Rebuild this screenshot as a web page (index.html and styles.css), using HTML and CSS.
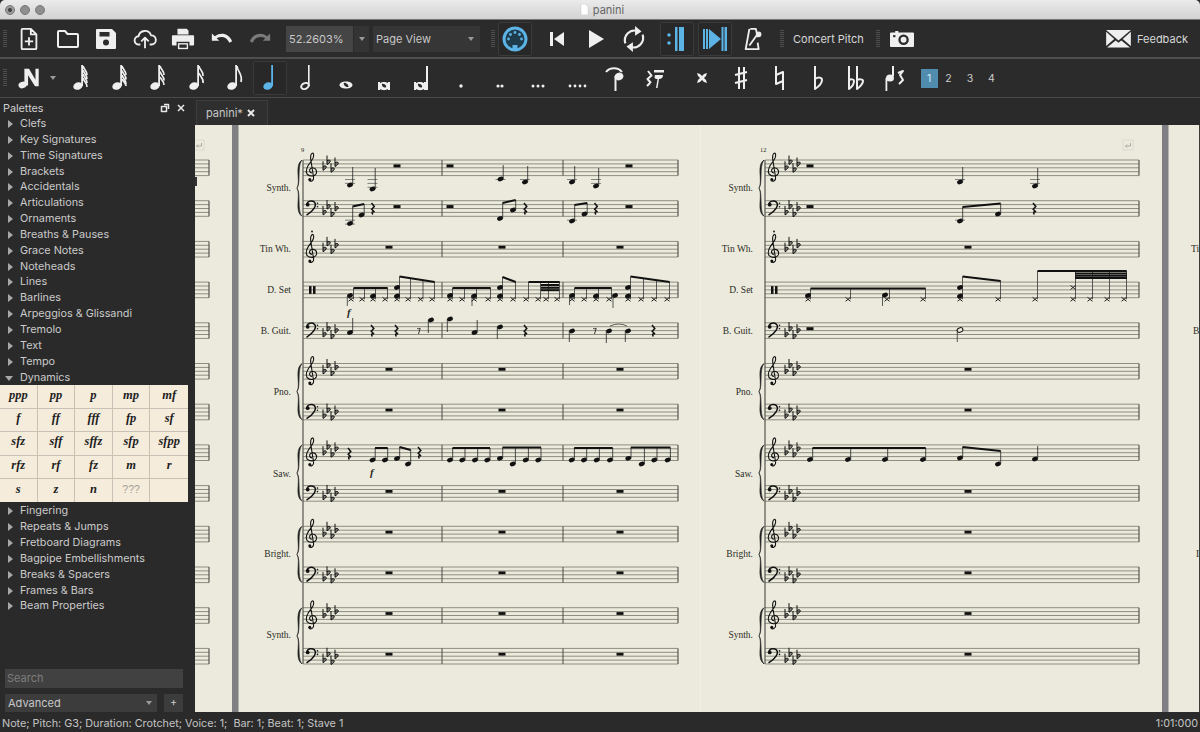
FILE: index.html
```html
<!DOCTYPE html>
<html lang="en">
<head>
<meta charset="utf-8">
<title>panini</title>
<link rel="stylesheet" href="styles.css">
</head>
<body>
<svg class="defs" width="0" height="0" aria-hidden="true">
  <symbol id="stem" viewBox="0 0 24 28"><ellipse cx="10" cy="22" rx="4.800" ry="3.700" transform="rotate(-20 10 22)"/><rect x="13.200" y="1" width="1.800" height="21"/></symbol>
  <symbol id="grip" viewBox="0 0 4 18"><path class="dots" d="M1 0V18M3 0V18"/></symbol>
</svg>
<div class="app">
  <header class="titlebar">
    <div class="lights"><i></i><i></i><i></i></div>
    <div class="wintitle"><svg class="docmini" viewBox="0 0 10 12"><path d="M1 0h5l3 3v9H1z"/></svg>panini</div>
  </header>

  <div class="toolbar row1">
    <svg class="grip"><use href="#grip"/></svg>
    <span class="tb"><svg viewBox="0 0 24 26"><path class="ln" d="M5 2h9l6 6v15a1 1 0 0 1-1 1H5a1 1 0 0 1-1-1V3a1 1 0 0 1 1-1zM14 2v6h6M12 11v9M7.500 15.500h9"/></svg></span>
    <span class="tb"><svg viewBox="0 0 24 24"><path class="ln" d="M2 5a1 1 0 0 1 1-1h6l2.500 3H21a1 1 0 0 1 1 1v11a1 1 0 0 1-1 1H3a1 1 0 0 1-1-1z"/></svg></span>
    <span class="tb"><svg viewBox="0 0 24 24"><path d="M3 2h15l4 4v15a1 1 0 0 1-1 1H3a1 1 0 0 1-1-1V3a1 1 0 0 1 1-1z"/><rect class="cut" x="5.500" y="5" width="10" height="4.500"/><circle class="cut" cx="12" cy="15.500" r="3"/></svg></span>
    <span class="tb"><svg viewBox="0 0 26 24"><path class="ln" d="M8 18H6.500a4.500 4.500 0 0 1-.5-9 7 7 0 0 1 13.500-1 5 5 0 0 1 .5 10h-2M13 22V11M9 14.500 13 10.500l4 4"/></svg></span>
    <span class="tb"><svg viewBox="0 0 26 24"><path d="M7 1h10l2 2v4H7z"/><path d="M2 8h22a1 1 0 0 1 1 1v9a1 1 0 0 1-1 1h-4v-4H6v4H2a1 1 0 0 1-1-1V9a1 1 0 0 1 1-1z"/><rect x="7.500" y="16.500" width="11" height="6.500"/><rect class="cut" x="9" y="18" width="8" height="3.500"/></svg></span>
    <span class="tb"><svg viewBox="0 0 26 24"><path d="M2 6v8h8L7.200 11.300C12 8.500 18 9.500 21 16l3-1.500C20.500 6 12 4 5.200 9z"/></svg></span>
    <span class="tb off"><svg viewBox="0 0 26 24"><path d="M24 6v8h-8l2.800-2.700C14 8.500 8 9.500 5 16l-3-1.500C5.500 6 14 4 20.800 9z"/></svg></span>
    <span class="combo zoomval">52.2603%</span>
    <span class="combo arrowbtn"><i class="caret"></i></span>
    <span class="combo viewsel">Page View<i class="caret"></i></span>
    <svg class="grip g2"><use href="#grip"/></svg>
    <span class="box blue"><svg viewBox="0 0 26 26"><circle cx="13" cy="13" r="11" class="ring"/><g class="mdots"><circle cx="6.500" cy="13" r="1.400"/><circle cx="8.500" cy="8.500" r="1.400"/><circle cx="13" cy="6.500" r="1.400"/><circle cx="17.500" cy="8.500" r="1.400"/><circle cx="19.500" cy="13" r="1.400"/></g><rect x="10.500" y="19" width="5" height="4.500" class="mkey"/></svg></span>
    <span class="tb gapl"><svg viewBox="0 0 24 24"><rect x="5" y="5" width="3" height="14"/><path d="M19 5v14L9 12z"/></svg></span>
    <span class="tb"><svg viewBox="0 0 24 24"><path d="M5 3v18l15-9z"/></svg></span>
    <span class="tb"><svg class="loop" viewBox="0 0 24 26"><path class="ln" d="M4 17a9 9 0 0 1 11-11.500M20 9a9 9 0 0 1-11 11.500"/><path d="M13 1l6 5-6 4zM11 25l-6-5 6-4z"/></svg></span>
    <span class="box blue b1"><svg viewBox="0 0 26 26"><circle cx="5" cy="9" r="1.800"/><circle cx="5" cy="17" r="1.800"/><rect x="11" y="1" width="2.500" height="24"/><rect x="15" y="1" width="5" height="24"/></svg></span>
    <span class="box blue b2"><svg viewBox="0 0 26 26"><rect x="1" y="3" width="2" height="20"/><rect x="4" y="3" width="2" height="20"/><path d="M7 3v20l12-10z"/><rect x="19.500" y="1" width="2" height="24"/><rect x="22.500" y="1" width="2.500" height="24"/></svg></span>
    <span class="tb mt"><svg viewBox="0 0 24 26"><path class="ln" d="M8 2h6l2 9M7 2 3 24h14l-1-7"/><path class="ln" d="M7 20 15 9"/><circle cx="17" cy="8" r="3"/></svg></span>
    <svg class="grip g3"><use href="#grip"/></svg>
    <span class="lbl concert">Concert Pitch</span>
    <svg class="grip g4"><use href="#grip"/></svg>
    <svg class="cam" viewBox="0 1 23 16.500"><path d="M1 3h4V1.500h3V3h14a1 1 0 0 1 1 1v12a1 1 0 0 1-1 1H1a1 1 0 0 1-1-1V4a1 1 0 0 1 1-1z"/><circle class="cut" cx="13" cy="10" r="5"/><circle cx="13" cy="10" r="2.800"/><rect class="cut" x="3" y="5.500" width="2.200" height="2"/></svg>
    <span class="spacer"></span>
    <svg class="mail" viewBox="0 0 26 20"><path d="M0 1h26L13 12z"/><path d="M0 3v15l8.500-7.500zM26 3v15l-8.500-7.500zM1 19.500h24L16 12l-3 2.500L10 12z"/></svg>
    <span class="lbl feedback">Feedback</span>
  </div>

  <div class="toolbar row2">
    <svg class="grip"><use href="#grip"/></svg>
    <span class="tb"><svg viewBox="0 0 26 26"><ellipse cx="6" cy="20.500" rx="4.500" ry="3.500" transform="rotate(-20 6 20.500)"/><path d="M8 3h5l7 12V3h3.500v19h-4L12 10v11H8z"/></svg></span>
    <span class="dd"><i class="caret"></i></span>
    <span class="tb"><svg class="nt" viewBox="0 0 24 28"><use href="#stem"/><path class="ln fl" d="M15 2c.5 3 4.500 5 4 9M15 6c.5 3 4.500 5 4 9M15 10c.5 3 4.500 5 4 9M15 14c.5 3 4.500 5 4 9"/></svg></span>
    <span class="tb"><svg class="nt" viewBox="0 0 24 28"><use href="#stem"/><path class="ln fl" d="M15 2c.5 3 4.500 5 4 9M15 6.500c.5 3 4.500 5 4 9M15 11c.5 3 4.500 5 4 9M15 15c.5 2 4 4 4 7"/></svg></span>
    <span class="tb"><svg class="nt" viewBox="0 0 24 28"><use href="#stem"/><path class="ln fl" d="M15 2c.5 3 4.500 5 4 9M15 7.500c.5 3 4.500 5 4 9M15 13c.5 2 4 4 4 8"/></svg></span>
    <span class="tb"><svg class="nt" viewBox="0 0 24 28"><use href="#stem"/><path class="ln fl" d="M15 2c.5 4 5 5.500 4 10M15 9c.5 3 5 5 4 10"/></svg></span>
    <span class="tb"><svg class="nt" viewBox="0 0 24 28"><use href="#stem"/><path class="ln fl" d="M15 2c.5 6 6 8 4 16"/></svg></span>
    <span class="box blue sel"><svg class="nt" viewBox="0 0 24 28"><use href="#stem"/></svg></span>
    <span class="tb n1"><svg class="nt" viewBox="0 0 24 28"><ellipse class="ln" cx="10" cy="22" rx="4" ry="2.800" transform="rotate(-25 10 22)"/><rect x="13" y="1" width="1.600" height="21"/></svg></span>
    <span class="tb"><svg class="nt" viewBox="0 0 24 28"><path fill-rule="evenodd" d="M12 17.500c3.800 0 6.500 1.600 6.500 3.500s-2.700 3.500-6.500 3.500-6.500-1.600-6.500-3.500 2.700-3.500 6.500-3.500zm-2 1.500c-1 .8.500 3.500 3 4 1.500.2 2-.5 1-2-1-1.500-3-2.700-4-2z"/></svg></span>
    <span class="tb"><svg class="nt" viewBox="0 0 24 28"><path fill-rule="evenodd" d="M6 18h2v1c2-1.500 6-1.500 8 0v-1h2v8h-2v-1c-2 1.500-6 1.500-8 0v1H6zm4 2c-.5 1 .5 3 2.500 3.500 1.500 0 2-.5 1.500-1.800-.5-1.200-3-2.500-4-1.700z"/></svg></span>
    <span class="tb"><svg class="nt" viewBox="0 0 24 28"><path fill-rule="evenodd" d="M3 18h2v1c2-1.500 6-1.500 8 0v-1h2V2h2v24h-4v-1c-2 1.500-6 1.500-8 0v1H3zm4 2c-.5 1 .5 3 2.500 3.500 1.500 0 2-.5 1.500-1.800-.5-1.200-3-2.500-4-1.700z"/></svg></span>
    <span class="tb"><svg class="nt" viewBox="0 0 24 28"><circle cx="12" cy="22" r="1.700"/></svg></span>
    <span class="tb"><svg class="nt" viewBox="0 0 24 28"><circle cx="10" cy="22" r="1.600"/><circle cx="14" cy="22" r="1.600"/></svg></span>
    <span class="tb"><svg class="nt" viewBox="0 0 24 28"><circle cx="7" cy="22" r="1.500"/><circle cx="12" cy="22" r="1.500"/><circle cx="17" cy="22" r="1.500"/></svg></span>
    <span class="tb"><svg class="nt" viewBox="0 0 24 28"><circle cx="5" cy="22" r="1.400"/><circle cx="10" cy="22" r="1.400"/><circle cx="15" cy="22" r="1.400"/><circle cx="20" cy="22" r="1.400"/></svg></span>
    <span class="tb"><svg class="nt" viewBox="0 0 24 28"><path class="ln" d="M3 8C7 3 15 3 19 8"/><ellipse cx="16" cy="12.500" rx="4.500" ry="3.800" transform="rotate(-20 16 12.500)"/><rect x="11.500" y="12" width="2" height="15"/></svg></span>
    <span class="tb"><svg class="nt" viewBox="0 0 24 28"><path class="ln" d="M6 7l3.500 4.500L5.500 15l3.500 4M5 22l3-3"/><rect x="12" y="6" width="10" height="2.500"/><path d="M13 11h8c0 3-2 4-4 4l-1.500 9h-1.500l1.500-9c-1 0-3-.5-3-1.500z"/></svg></span>
    <span class="tb acc"><svg class="nt" viewBox="0 0 24 28"><path d="M7 10l3 1 2 2 2-2 3-1-1 3-2 2 2 2 1 3-3-1-2-2-2 2-3 1 1-3 2-2-2-2z" transform="translate(0 -1)"/></svg></span>
    <span class="tb"><svg class="nt" viewBox="0 0 24 28"><path class="ln" d="M10 3v22M15 3v22M6 11l12-3M6 19l12-3"/></svg></span>
    <span class="tb"><svg class="nt" viewBox="0 0 24 28"><path class="ln" d="M9 2v18l7-3M16 26V8l-7 3"/></svg></span>
    <span class="tb"><svg class="nt" viewBox="0 0 24 28"><path class="ln" d="M9 2v23c3-2 7-6 7-9 0-3-4-3-7-1"/></svg></span>
    <span class="tb"><svg class="nt" viewBox="0 0 24 28"><path class="ln" d="M5 2v23c2-1.500 5-5 5-8 0-2-3-2-5-1M13 2v23c2-1.500 6-5 6-8 0-2-4-2-6-1"/></svg></span>
    <span class="tb"><svg class="nt" viewBox="0 0 24 28"><ellipse cx="7" cy="14" rx="4" ry="3.500"/><rect x="2.500" y="14" width="1.800" height="13"/><path class="ln" d="M10 2v10M15 9l5-2-3 4 3 5-4 4"/></svg></span>
    <span class="voice on">1</span><span class="voice">2</span><span class="voice">3</span><span class="voice">4</span>
  </div>

  <div class="main">
    <aside class="palette">
      <div class="palhead"><span>Palettes</span><span class="palbtns"><svg viewBox="0 0 10 10"><path class="ln" d="M1.500 3.500h5v5h-5zM4 1.500h4.500V6"/></svg><svg viewBox="0 0 10 10"><path class="ln" d="M2 2l6 6M8 2l-6 6"/></svg></span></div>
      <ul class="pallist">
        <li>Clefs</li><li>Key Signatures</li><li>Time Signatures</li><li>Brackets</li><li>Accidentals</li><li>Articulations</li><li>Ornaments</li><li>Breaths &amp; Pauses</li><li>Grace Notes</li><li>Noteheads</li><li>Lines</li><li>Barlines</li><li>Arpeggios &amp; Glissandi</li><li>Tremolo</li><li>Text</li><li>Tempo</li><li class="open">Dynamics</li>
      </ul>
      <div class="dyn">
        <b>ppp</b><b>pp</b><b>p</b><b>mp</b><b>mf</b>
        <b>f</b><b>ff</b><b>fff</b><b>fp</b><b>sf</b>
        <b>sfz</b><b>sff</b><b>sffz</b><b>sfp</b><b>sfpp</b>
        <b>rfz</b><b>rf</b><b>fz</b><b>m</b><b>r</b>
        <b>s</b><b>z</b><b>n</b><b class="q">???</b><b></b>
      </div>
      <ul class="pallist after">
        <li>Fingering</li><li>Repeats &amp; Jumps</li><li>Fretboard Diagrams</li><li>Bagpipe Embellishments</li><li>Breaks &amp; Spacers</li><li>Frames &amp; Bars</li><li>Beam Properties</li>
      </ul>
      <div class="palfoot">
        <div class="search">Search</div>
        <div class="advrow"><div class="adv">Advanced<i class="caret"></i></div><div class="plus">+</div></div>
      </div>
    </aside>
    <section class="workspace">
      <div class="tabbar"><div class="tab">panini*<svg viewBox="0 0 10 10"><path class="ln" d="M2 2l6 6M8 2l-6 6"/></svg></div></div>
      <div class="score"><svg id="score" viewBox="195 125 1005 587" width="1005" height="587"></svg></div>
    </section>
  </div>

  <footer class="status"><span>Note; Pitch: G3; Duration: Crotchet; Voice: 1;&nbsp; Bar: 1; Beat: 1; Stave 1</span><span>1:01:000</span></footer>
</div>
<script src="score.js"></script>
</body>
</html>
```
FILE: styles.css
```css
* { box-sizing: border-box; }
html, body { margin: 0; height: 100%; background: #000; overflow: hidden; }
body { font-family: Inter, "Liberation Sans", sans-serif; font-size: 10.800px; color: #d0d0d0; }
.defs { position: absolute; }
.app { width: 1200px; height: 732px; display: flex; flex-direction: column; background: #2a2a2a; }
i { display: block; font-style: normal; }

.titlebar { height: 20px; flex: none; display: grid; grid-template-columns: 1fr auto 1fr; align-items: center; background: linear-gradient(#ebebeb, #d2d2d2); border-radius: 5px 5px 0 0; border-bottom: 1px solid #777; }
.lights { display: flex; gap: 5px; padding-left: 5px; }
.lights i { width: 10px; height: 10px; border-radius: 50%; background: #8f8f8f; border: 1px solid #777; }
.lights i:first-child { background: radial-gradient(#444 30%, #9a9a9a 40%); }
.wintitle { display: flex; align-items: center; gap: 4px; color: #666; font-size: 11px; padding-left: 4px; }
.docmini { width: 9px; height: 11px; fill: #fff; stroke: #bbb; stroke-width: .5; }

.toolbar { display: flex; align-items: center; flex: none; padding-left: 3px; background: #2b2b2b; border-bottom: 2px solid #4e4e4e; color: #efefef; fill: #efefef; }
.row1 { height: 39px; }
.row2 { height: 39px; border-bottom: 1px solid #4a4a4a; }
.grip { width: 4px; height: 18px; margin-right: 3px; flex: none; }
.dots { fill: none; stroke: #666; stroke-width: 1.200; stroke-dasharray: 1 1; }
.ln { fill: none; stroke: currentColor; stroke-width: 2; stroke-linejoin: round; }
.fl { stroke-width: 1.700; }
.cut { fill: #2b2b2b; }

.tb { width: 38.500px; height: 34px; flex: none; display: flex; align-items: center; justify-content: center; }
.tb svg { width: 24px; height: 24px; }
.tb svg.nt { width: 24px; height: 28px; }
.tb svg.loop { width: 26px; height: 28px; }
.off { fill: #7a7a7a; color: #7a7a7a; }
.combo { height: 26px; background: #3c3c3c; flex: none; display: flex; align-items: center; color: #c8c8c8; font-size: 11px; }
.zoomval { width: 67px; margin-left: 6.500px; padding-left: 3px; background: #454545; }
.arrowbtn { width: 15px; margin-left: 1px; justify-content: center; background: #343434; }
.viewsel { width: 107px; margin-left: 4px; padding: 0 4px 0 3px; justify-content: space-between; background: #363636; }
.caret { width: 0; height: 0; border: 3.500px solid transparent; border-top: 4px solid #9a9a9a; border-bottom: 0; }
.viewsel .caret { margin-right: 2px; }
.g2 { margin: 0 3.500px 0 10.500px; }
.box { width: 34px; height: 34px; flex: none; display: flex; align-items: center; justify-content: center; background: #282828; border: 1px solid #3a3a3a; border-radius: 2px; }
.box svg { width: 26px; height: 26px; }
.blue { fill: #5cb3e6; color: #5cb3e6; }
.ring { fill: #1f3c4c; stroke: #5cb3e6; stroke-width: 3; }
.mdots circle { fill: #5cb3e6; }
.mkey { fill: #5cb3e6; }
.gapl { margin-left: 6px; }
.b1 { margin-left: 6px; }
.b2 { margin-left: 4px; }
.mt { margin-left: 3px; }
.g3 { margin: 0 9px 0 7px; }
.concert { width: 70px; flex: none; white-space: nowrap; }
.g4 { margin: 0 10px 0 13px; }
.lbl { font-size: 11px; color: #d8d8d8; }
.cam { width: 24px; height: 18px; flex: none; }
.spacer { flex: 1; }
.mail { width: 25px; height: 19px; flex: none; }
.feedback { width: 50px; margin: 0 13px 0 6px; flex: none; white-space: nowrap; }

.dd { width: 12.250px; flex: none; display: flex; justify-content: flex-start; padding-left: 1px; }
.box.sel svg { width: 24px; height: 28px; }
.sel { margin-left: -.500px; }
.n1 { margin-left: 1px; }
.acc { margin-left: 10px; }
.voice { width: 21.500px; text-align: center; font-size: 10.500px; color: #ccc; flex: none; }
.voice.on { width: 17px; height: 19px; line-height: 19px; margin: 0 0 0 7px; background: #4f8cae; color: #d6ebf5; }

.main { flex: 1; display: flex; min-height: 0; }
.palette { width: 195px; flex: none; display: flex; flex-direction: column; padding-top: 2px; background: #2a2a2a; }
.palhead { height: 16px; flex: none; display: flex; justify-content: space-between; align-items: center; padding: 0 9px 0 3px; color: #cfcfcf; font-size: 10.800px; }
.palbtns { display: flex; gap: 6px; color: #e8e8e8; }
.palbtns svg { width: 10px; height: 10px; }
.palbtns .ln { stroke-width: 1.500; }
.pallist { list-style: none; margin: 0; padding: 0; flex: none; }
.pallist li { height: 15.850px; line-height: 15.850px; padding-left: 20px; color: #cbcbcb; font-size: 10.800px; position: relative; white-space: nowrap; }
.pallist li::before { content: ""; position: absolute; left: 8px; top: 4px; border: 4px solid transparent; border-left: 5px solid #a8a8a8; border-right: 0; }
.pallist li.open::before { left: 5px; top: 6px; border: 4.500px solid transparent; border-top: 5px solid #a8a8a8; border-bottom: 0; }
.dyn { width: 188px; height: 117px; flex: none; display: grid; grid-template-columns: repeat(5, 1fr); grid-template-rows: repeat(5, 1fr); background: #f5ecdc; }
.dyn b { display: flex; align-items: center; justify-content: center; padding-bottom: 3px; border-right: 1px solid #c9c1b6; border-bottom: 1px solid #c9c1b6; font: italic bold 12.500px "Liberation Serif", serif; color: #1e1e1e; }
.dyn b:nth-child(5n) { border-right: 0; }
.dyn b:nth-child(n+21) { border-bottom: 0; }
.dyn .q { font: 10.500px "Liberation Sans", sans-serif; color: #a39e94; }
.after { margin-top: 1px; }
.palfoot { margin-top: auto; padding: 0 12px 0 5px; }
.search { height: 19px; line-height: 19px; padding-left: 2px; background: #414141; color: #7d7d7d; font-size: 11px; }
.advrow { display: flex; justify-content: space-between; margin-top: 6px; }
.adv { width: 152px; height: 18px; padding: 0 5px 0 3px; display: flex; align-items: center; justify-content: space-between; background: #3c3c3c; color: #c8c8c8; font-size: 11px; }
.plus { width: 19px; height: 18px; line-height: 18px; text-align: center; background: #3c3c3c; color: #ccc; }

.workspace { flex: 1; display: flex; flex-direction: column; min-width: 0; }
.tabbar { height: 27px; flex: none; padding: 2px 0 0 1px; background: #2a2a2a; }
.tab { width: 72px; height: 25px; display: flex; align-items: center; justify-content: space-between; padding: 0 11px 0 9px; background: #2f2f2f; border: 1px solid #3d3d3d; border-bottom: 0; color: #c8c8c8; font-size: 11px; }
.tab svg { width: 10px; height: 10px; color: #e8e8e8; }
.score { flex: 1; min-height: 0; background: #ebeadc; overflow: hidden; }
#score { display: block; }
#score text { font-family: "Liberation Serif", serif; fill: #2b2b26; }
.status { height: 20px; flex: none; display: flex; justify-content: space-between; align-items: center; padding: 2px 2px 0; background: #2a2a2a; color: #c4c4c4; font-size: 10.800px; }
```
FILE: score.js
```js
// Draws the two score systems from note data.
const out = [];
const add = s => out.push(s);
const line = (x1, y1, x2, y2, w = 1, c = '#111') => add(`<line x1="${x1}" y1="${y1}" x2="${x2}" y2="${y2}" stroke="${c}" stroke-width="${w}"/>`);
const TOP = i => 160 + 40.7 * i;
const GAP = 3.9;
const head = (x, y) => add(`<ellipse cx="${x}" cy="${y}" rx="3" ry="2.2" transform="rotate(-20 ${x} ${y})" fill="#111"/>`);
const cross = (x, y) => { line(x - 2.5, y - 2, x + 2.5, y + 2, 1, '#222'); line(x - 2.5, y + 2, x + 2.5, y - 2, 1, '#222'); };

function ledgers(x, y, T) {
  for (let ly = T + GAP * 5; ly <= y + 1.2; ly += GAP) line(x - 5, ly, x + 5, ly, .8, '#666');
}
function note(x, y, to, T) {
  if (T !== undefined) ledgers(x, y, T);
  head(x, y);
  const sx = to < y ? x + 2.7 : x - 2.7;
  line(sx, y, sx, to, .8, '#222');
}
function beam(x1, y1, x2, y2, w = 2) { line(x1, y1, x2, y2, w, '#111'); }
function group(ns, y1, y2, kind) {
  const x0 = ns[0][0], xN = ns[ns.length - 1][0];
  const at = x => y1 + (y2 - y1) * (x - x0) / ((xN - x0) || 1);
  ns.forEach(([x, y, T]) => {
    if (kind === 'x') { cross(x, y); line(x + 2.5, y, x + 2.5, at(x), .8, '#333'); }
    else { if (T) ledgers(x, y, T); head(x, y); line(x + 2.7, y, x + 2.7, at(x), .8, '#222'); }
  });
  beam(x0 + 2.5, y1, xN + 2.7, y2);
}
const wrest = (x, i) => add(`<rect x="${x - 3.5}" y="${TOP(i) + 4.4}" width="7" height="2.8" fill="#111"/>`);
const hrest = (x, i) => add(`<rect x="${x - 3.5}" y="${TOP(i) + 4.4}" width="7" height="3" fill="#111"/>`);
const qrest = (x, y) => add(`<path d="M${x - 1} ${y - 5}l2.800 3.500-2.600 2.800 2.800 2.700c-2-.8-3.400.2-1.600 2.500" fill="none" stroke="#111" stroke-width="1.500"/>`);
const erest = (x, y) => add(`<path d="M${x - 2} ${y - 2}c.8 1.200 2 1 3.200 0L${x - .5} ${y + 4}" fill="none" stroke="#222" stroke-width=".9"/>`);
const flat = (x, y) => add(`<path d="M${x} ${y - 6.500}V${y + 2.500}c2-1 3.600-2.500 3.200-3.800-.4-1-2-.8-3.200.2" fill="#333" fill-opacity=".55" stroke="#111" stroke-width="1"/>`);

function treble(x, T, eight) {
  add(`<g transform="translate(${x} ${T})"><path d="M1 13C-1.500 13-2.500 9.500 0 8.300 4 7 6.500 10 5.300 13.500 4 16.500-1 17-4 14-6.500 10-3 5 .7.500 3-2.500 3.200-6 1.800-7 0-7-1-4 0 1L2.600 17.500C3 20.500 0 22-2 20.500" fill="none" stroke="#111" stroke-width="1.100"/><circle cx="-1.200" cy="19.500" r="1.500" fill="#111"/>${eight ? '<circle cx="1" cy="-10" r="1" fill="#222"/>' : ''}</g>`);
}
function bass(x, T) {
  add(`<g transform="translate(${x} ${T})"><path d="M-4 3.500C-3.500 0 1 -.5 3.500 1.500 6 4.500 3 10-4.500 14.500" fill="none" stroke="#111" stroke-width="1.500"/><circle cx="-3.300" cy="4" r="1.900" fill="#111"/><circle cx="6.500" cy="2.500" r=".8" fill="#111"/><circle cx="6.500" cy="6" r=".8" fill="#111"/></g>`);
}
function brace(x, y0, y1) {
  const m = (y0 + y1) / 2;
  add(`<path d="M${x} ${y0}C${x - 8} ${y0 + 5} ${x - 1} ${m - 7} ${x - 5} ${m}C${x - 1} ${m + 7} ${x - 8} ${y1 - 5} ${x} ${y1}C${x - 5} ${y1 - 6} ${x - 1} ${m + 5} ${x - 5} ${m}C${x - 1} ${m - 5} ${x - 5} ${y0 + 6} ${x} ${y0}z" fill="#222" stroke="#222" stroke-width=".6"/>`);
}
const label = (t, x, y, a = 'end') => add(`<text x="${x}" y="${y}" font-size="9.500" text-anchor="${a}">${t}</text>`);
function breakIcon(x, y) {
  add(`<rect x="${x}" y="${y}" width="10" height="10" fill="#eceadf" stroke="#d2d0c4" stroke-width=".6"/><path d="M${x + 7.500} ${y + 3}v3h-5m1.500-1.500-1.500 1.500 1.500 1.500" fill="none" stroke="#9d9c90" stroke-width=".8"/>`);
}

const CLEFS = ['t', 'b', 'T', 'p', 'b', 't', 'b', 't', 'b', 't', 'b', 't', 'b'];
function system(x0, x1, bars, numX, num) {
  CLEFS.forEach((c, i) => {
    const T = TOP(i);
    for (let l = 0; l < 5; l++) line(x0, T + l * GAP, x1, T + l * GAP, 1, '#8e8e80');
    bars.forEach(b => line(b, T, b, T + 4 * GAP, 1, '#4a4a44'));
    line(x1, T, x1, T + 4 * GAP, 1.1, '#4a4a44');
    const cx = x0 + 8;
    if (c === 't' || c === 'T') {
      treble(cx, T, c === 'T');
      [[20, 7.8], [24, 2], [28, 9.8], [32, 4]].forEach(([dx, dy]) => flat(x0 + dx, T + dy));
    } else if (c === 'b') {
      bass(cx, T);
      [[20, 11.700], [24, 5.850], [28, 13.600], [32, 7.800]].forEach(([dx, dy]) => flat(x0 + dx, T + dy));
    } else {
      add(`<rect x="${x0 + 6}" y="${T + 4}" width="2.500" height="7.800" fill="#111"/><rect x="${x0 + 10}" y="${T + 4}" width="2.500" height="7.800" fill="#111"/>`);
    }
  });
  line(x0, TOP(0), x0, TOP(12) + 4 * GAP, 1.2, '#55554f');
  [[0, 1], [5, 6], [7, 8], [9, 10], [11, 12]].forEach(([a, b]) => brace(x0 - 1, TOP(a), TOP(b) + 4 * GAP));
  add(`<text x="${numX}" y="152" font-size="6.500">${num}</text>`);
  const lx = x0 - 12;
  [['Synth.', 191], ['Tin Wh.', 252], ['D. Set', 293], ['B. Guit.', 334], ['Pno.', 395], ['Saw.', 477], ['Bright.', 557], ['Synth.', 638]].forEach(([t, y]) => label(t, lx, y));
}

add('<rect x="195" y="125" width="1005" height="587" fill="#ebeadc"/>');
// previous page fragment
CLEFS.forEach((c, i) => {
  const T = TOP(i);
  for (let l = 0; l < 5; l++) line(195, T + l * GAP, 209, T + l * GAP, 1, '#8e8e80');
  line(209, T, 209, T + 4 * GAP, 1.1, '#4a4a44');
});
add('<rect x="195" y="177" width="2" height="9" fill="#333"/>');
breakIcon(194, 140);
// page gutters
add('<rect x="232" y="125" width="6.500" height="587" fill="#7f7f84"/><rect x="1162" y="125" width="6.500" height="587" fill="#7f7f84"/><rect x="700" y="125" width="1" height="587" fill="#f1f0e4"/><rect x="1199" y="125" width="1" height="587" fill="#3c3c36"/>');

system(303, 678, [442, 563], 301, '9');
system(765, 1139, [], 760, '12');
breakIcon(1123, 140);

label('Ti', 1191, 252, 'start');
label('B', 1193, 334, 'start');
label('I', 1196, 557, 'start');

// ---- system one: whole-bar rests
[2, 5, 6, 8, 9, 10, 11, 12].forEach(i => [389, 502, 620].forEach(x => wrest(x, i)));
// Synth upper
note(350, 185, 167, TOP(0)); note(372.5, 189, 168, TOP(0)); hrest(397, 0);
hrest(450, 0); note(500.5, 179, 165, TOP(0)); note(525, 182, 166, TOP(0));
note(572, 182, 166, TOP(0)); note(596, 186, 168, TOP(0)); hrest(629, 0);
// Synth lower
group([[350, 223.5, TOP(1)], [361.5, 215]], 206.500, 204); qrest(372.5, 208); hrest(397, 1);
hrest(450, 1); group([[500, 218.500], [513, 210]], 203, 200); qrest(525, 208);
group([[572, 221, TOP(1)], [584.5, 214]], 205, 203); qrest(595.500, 208); hrest(629, 1);
// Drum set
const X = 299.3;
group([[351, X], [362, X], [373, X], [385, X]], 288, 288, 'x');
group([[397, X], [408, X], [420.5, X], [432, X]], 276.5, 282, 'x');
head(350, 295.5); line(347.3, 296, 347.3, 306, .8, '#333'); head(373, 296); head(397, 287.5); head(397, 296);
add('<text x="347" y="316" font-size="11" font-style="italic" font-weight="bold">f</text>');
group([[450, X], [462, X], [474, X], [488, X]], 288, 288, 'x');
group([[500, X], [513, X]], 277, 282, 'x');
group([[526, X], [538, X], [546, X], [557, X]], 282, 282, 'x');
beam(541, 285, 559, 285); beam(541, 287.8, 559, 287.8); beam(541, 290.2, 559, 290.2);
head(450, 295.5); head(474, 296); line(472, 296, 472, 306, .8, '#333'); head(500, 287.5); head(500, 296);
group([[572, X], [584, X], [596, X], [609, X]], 288, 288, 'x');
group([[628, X], [641, X], [654, X], [667, X]], 276.5, 282, 'x');
head(572, 295.500); line(569.5, 296, 569.5, 305, .8, '#333'); head(596, 296); head(615, 295.500); line(613, 296, 613, 308, .8, '#333'); head(628, 287.5); head(628, 296);
// Bass guitar
note(350, 332.5, 318); qrest(372, 330); qrest(396, 330); erest(419, 330); note(431, 320, 333);
note(450, 319, 332); note(474.5, 332.5, 320); note(500, 327, 339); qrest(525, 330);
note(572, 331, 342); erest(595, 330); note(609, 331, 343); note(628, 331, 342); qrest(653, 330);
add('<path d="M610 326Q619 322 627 326" fill="none" stroke="#222" stroke-width=".7"/>');
// Saw upper
qrest(349, 453);
group([[372.5, 460], [385, 460]], 448, 448);
group([[397, 458.5], [408, 464]], 447, 450);
qrest(419, 452);
add('<text x="370" y="476" font-size="11" font-style="italic" font-weight="bold">f</text>');
group([[450, 460], [462.3, 460], [475, 460], [487.3, 460]], 448, 448);
group([[500, 458.3], [512.7, 464], [525.7, 460], [538.3, 460]], 447.5, 447.5);
group([[571.7, 460], [584, 460], [596.7, 460], [610, 460]], 448, 448);
group([[628.3, 458.3], [641.7, 464], [654.3, 460], [667.7, 460]], 447.5, 447.5);

// ---- system two
[2, 5, 6, 8, 9, 10, 11, 12].forEach(i => wrest(968, i));
hrest(810, 0); note(960, 182, 167, TOP(0)); note(1035, 186, 168, TOP(0));
hrest(810, 1); group([[960, 221, TOP(1)], [998, 214]], 207, 203.500); qrest(1034, 208);
group([[808, X], [848, X], [887, X], [923, X]], 288.5, 288.5, 'x');
head(808, 295.500); head(885, 295); line(882.5, 296, 882.5, 306, .8, '#333');
group([[960, X], [998, X]], 276.5, 281, 'x'); head(960, 287.500); head(960, 296);
group([[1035, X], [1073, X], [1090, X], [1107, X], [1124, X]], 271, 271, 'x');
beam(1075, 273.5, 1127, 273.5); beam(1075, 275.8, 1127, 275.8); beam(1075, 278, 1127, 278);
cross(1073, 287.5);
hrest(810, 4);
add('<ellipse cx="960" cy="330" rx="3" ry="2.200" transform="rotate(-20 960 330)" fill="#ebeadc" stroke="#111" stroke-width="1"/>'); line(957.3, 330, 957.3, 342, .8, '#333');
group([[810, 459.5], [848, 459.5], [885, 459.5], [923, 459.5]], 448, 448);
group([[960, 458], [998, 464]], 447, 451);
note(1035, 459, 446);

document.getElementById('score').innerHTML = out.join('');
```
